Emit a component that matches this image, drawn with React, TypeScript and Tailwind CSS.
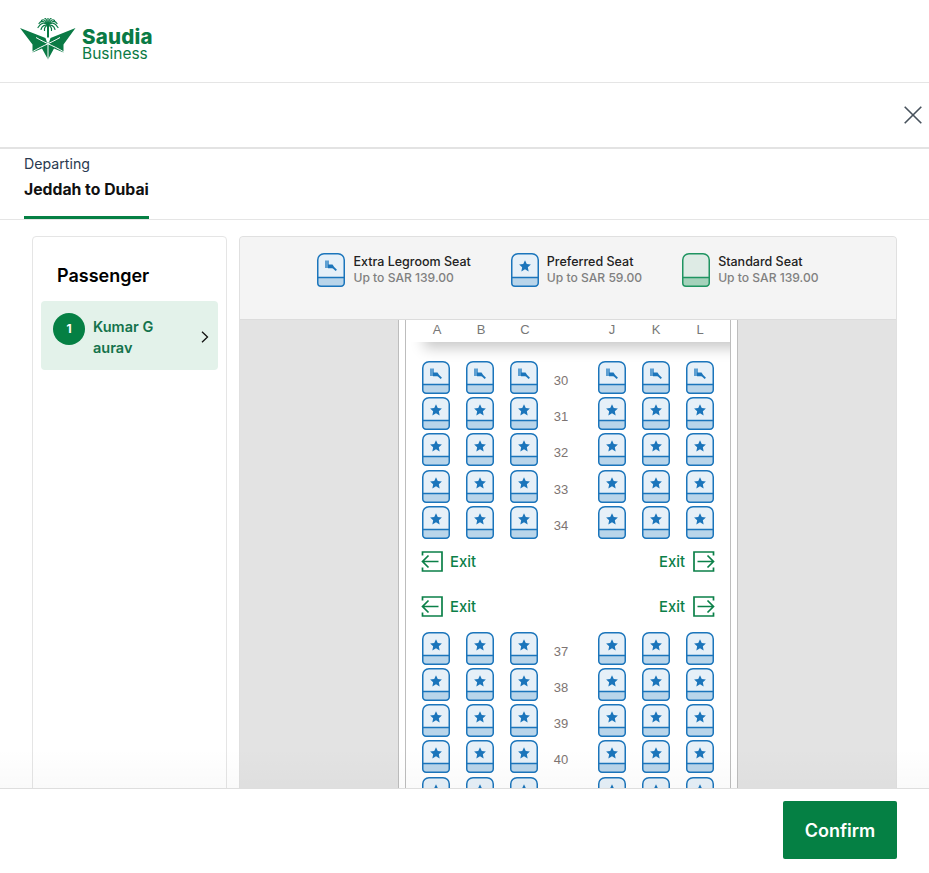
import React from "react";

const BLUE = "#1b75bb";

function Seat({ kind = "star", h = 33 }: { kind?: "star" | "leg" | "std"; h?: number }) {
  const std = kind === "std";
  const stroke = std ? "#1f9461" : BLUE;
  const top = std ? "#deebe5" : "#e6f0f8";
  const bottom = std ? "#a5d2bb" : "#b9d5ea";
  const split = h - 9.5;
  return (
    <svg width="28" height={h} viewBox={`0 0 28 ${h}`} className="block shrink-0">
      <path
        d={`M0.75 ${split} V7 A6.25 6.25 0 0 1 7 0.75 H21 A6.25 6.25 0 0 1 27.25 7 V${split} Z`}
        fill={top}
      />
      <path
        d={`M0.75 ${split} H27.25 V${h - 4} A3.25 3.25 0 0 1 24 ${h - 0.75} H4 A3.25 3.25 0 0 1 0.75 ${h - 4} Z`}
        fill={bottom}
      />
      <path
        d={`M0.75 ${h - 4} V7 A6.25 6.25 0 0 1 7 0.75 H21 A6.25 6.25 0 0 1 27.25 7 V${h - 4} A3.25 3.25 0 0 1 24 ${h - 0.75} H4 A3.25 3.25 0 0 1 0.75 ${h - 4} Z M0.75 ${split} H27.25`}
        fill="none"
        stroke={stroke}
        strokeWidth="1.5"
      />
      {kind === "star" && (
        <path
          d="M14 7.2 L15.75 11 L19.9 11.5 L16.85 14.3 L17.65 18.4 L14 16.35 L10.35 18.4 L11.15 14.3 L8.1 11.5 L12.25 11 Z"
          fill={BLUE}
        />
      )}
      {kind === "leg" && (
        <g>
          <path d="M8 7.5 H12 V15 H8 Z" fill="#5d9fd2" />
          <path d="M11 11.5 H15.5 L16.5 13 V15.2 H11 Z" fill={BLUE} />
          <path d="M15.5 13.8 L19.3 17.4" stroke={BLUE} strokeWidth="1.9" fill="none" />
        </g>
      )}
    </svg>
  );
}

function ExitIcon({ right = false }: { right?: boolean }) {
  return (
    <svg width="22" height="21" viewBox="0 0 22 21" fill="none" className={right ? "block -scale-x-100" : "block"}>
      <path
        d="M1.5 4.5 V1 H21 V20 H1.5 V16.5 M17.5 10.5 H1.5 M7.5 4.5 L1.5 10.5 L7.5 16.5"
        stroke="#0b8048"
        strokeWidth="1.7"
      />
    </svg>
  );
}

function Legend({ kind, title, price }: { kind: "star" | "leg" | "std"; title: string; price: string }) {
  return (
    <div className="flex items-start gap-2">
      <Seat kind={kind} h={34} />
      <div className="mt-[1px]">
        <div className="text-[12.5px] leading-[16px] font-medium text-[#222]">{title}</div>
        <div className="text-[12.1px] leading-[15px] font-medium text-[#808080]">{price}</div>
      </div>
    </div>
  );
}

const left = ["A", "B", "C"];
const right = ["J", "K", "L"];

function Row({ n, kind = "star" }: { n?: number; kind?: "star" | "leg" }) {
  return (
    <div className="flex h-[33px] pl-[16px]">
      <div className="flex gap-4">
        {left.map((c) => (
          <Seat key={c} kind={kind} />
        ))}
      </div>
      <div
        className="w-[60px] pr-[14px] pt-[12px] text-center text-[13px] leading-[15px] text-[#7d7472]"
        style={{ fontFamily: '"Liberation Sans", sans-serif' }}
      >
        {n}
      </div>
      <div className="flex gap-4">
        {right.map((c) => (
          <Seat key={c} kind={kind} />
        ))}
      </div>
    </div>
  );
}

function ExitRow({ className }: { className: string }) {
  return (
    <div className={`flex h-[21px] items-center justify-between pl-[15px] pr-[15px] ${className}`}>
      <div className="flex items-center gap-[7px]">
        <ExitIcon />
        <span className="pt-[2px] text-[14.8px] leading-[18px] font-medium text-[#0b8048]">Exit</span>
      </div>
      <div className="flex items-center gap-[8px]">
        <span className="pt-[2px] text-[14.8px] leading-[18px] font-medium text-[#0b8048]">Exit</span>
        <ExitIcon right />
      </div>
    </div>
  );
}

function Logo() {
  return (
    <div className="flex h-[82px] items-start pl-[20px]">
      <svg width="57" height="42" viewBox="20 17.5 57 42" className="mt-[17.5px] block shrink-0">
        <g stroke="#0a7a45" strokeWidth="1.2" fill="none" strokeLinecap="round">
          <path d="M48 25 C45 21 41 22 38 27" />
          <path d="M48 25 C45 20 41 20 39 23" />
          <path d="M48 25 C46 19 43 18.5 41.5 20" />
          <path d="M48 25 C47 19 46 18 45 18" />
          <path d="M48 25 V18" />
          <path d="M48 25 C49 19 50 18 51 18" />
          <path d="M48 25 C50 19 53 18.5 54.5 20" />
          <path d="M48 25 C51 20 55 20 57 23" />
          <path d="M48 25 C51 21 55 22 58 27" />
          <path d="M48 25 C45 24 42 25 41 29" />
          <path d="M48 25 C51 24 54 25 55 29" />
          <path d="M48 25 C46 25 44 27 44.5 30" />
          <path d="M48 25 C50 25 52 27 51.5 30" />
        </g>
        <path d="M47 25 H49 V37 H47 Z" fill="#0a7a45" />
        <path
          d="M20 27.5 L45.5 37.5 L47 42 H49 L50.5 37.5 L75.5 27.5 L63.5 44 L63.5 52 L54 48 L48 59 L42 48 L32.5 52 L32.5 44 Z"
          fill="#0a7a45"
        />
        <path d="M30 53 C38 47 50 43 60 37" stroke="#fff" strokeWidth="1" fill="none" />
        <path d="M66 53 C58 47 46 43 36 37" stroke="#fff" strokeWidth="1" fill="none" />
        <path d="M48 42 V59" stroke="#fff" strokeWidth="1" />
      </svg>
      <div className="ml-[5px] mt-[29px] text-[#0a7a45]">
        <div className="text-[20.5px] font-extrabold leading-[16px] tracking-[0.2px]">Saudia</div>
        <div className="text-[15.5px] leading-[17px]">Business</div>
      </div>
    </div>
  );
}

export default function App() {
  return (
    <div
      className="flex h-[873px] flex-col overflow-hidden bg-white text-black"
      style={{ fontFamily: 'Inter, "Liberation Sans", sans-serif' }}
    >
      <header className="h-[83px] shrink-0 border-b border-[#e5e5e5]">
        <Logo />
      </header>

      <div className="flex h-[66px] shrink-0 items-center justify-end border-b-2 border-[#e3e3e3] pr-[7px]">
        <svg width="18" height="18" viewBox="0 0 18 18" className="block" stroke="#47525c" strokeWidth="1.6">
          <path d="M0.7 0.7 L17.3 17.3 M17.3 0.7 L0.7 17.3" />
        </svg>
      </div>

      <div className="h-[71px] shrink-0 border-b border-[#e5e5e5] px-[24px]">
        <div className="inline-block h-[70px] border-b-[3px] border-[#058044] pt-[5px]">
          <div className="text-[14.2px] leading-[19px] text-[#2a3a50]">Departing</div>
          <div className="mt-[7px] text-[15.75px] font-bold leading-[20px] text-[#111]">Jeddah to Dubai</div>
        </div>
      </div>

      <main className="relative flex min-h-0 flex-1 gap-[12px] overflow-hidden pl-[32px] pt-[16px]">
        <aside className="h-[640px] w-[195px] shrink-0 rounded-t border border-[#e5e5e5] px-[8px]">
          <h2 className="pl-[16px] pt-[26px] text-[18px] font-semibold leading-[26px] text-black">Passenger</h2>
          <div className="mt-[12px] flex h-[69px] items-start rounded bg-[#e3f2ea] pl-[12px] pr-[8px] pt-[12px]">
            <div className="flex h-[32px] w-[32px] shrink-0 items-center justify-center rounded-full bg-[#058044] text-[12px] font-bold text-white">
              1
            </div>
            <div className="ml-[8px] mt-[3px] w-[66px] break-all text-[14.5px] font-semibold leading-[21px] text-[#14734c]">
              Kumar Gaurav
            </div>
            <svg width="8" height="12" viewBox="0 0 8 12" fill="none" className="ml-auto mr-[1px] mt-[18px]" stroke="#111" strokeWidth="1.3">
              <path d="M1 0.8 L6.5 6 L1 11.2" />
            </svg>
          </div>
        </aside>

        <section className="flex h-[640px] w-[658px] shrink-0 flex-col overflow-hidden rounded-t border border-[#e0e0e0] bg-[#e3e3e3]">
          <div className="flex h-[83px] shrink-0 justify-center gap-10 border-b border-[#dcdcdc] bg-[#f4f4f4] pt-[16px]">
            <Legend kind="leg" title="Extra Legroom Seat" price="Up to SAR 139.00" />
            <Legend kind="star" title="Preferred Seat" price="Up to SAR 59.00" />
            <Legend kind="std" title="Standard Seat" price="Up to SAR 139.00" />
          </div>

          <div className="ml-[158px] w-[340px] flex-1 border-x border-[#bdbdbd] bg-white px-[6px]">
            <div className="h-full overflow-hidden border-x border-[#bdbdbd]">
              <div
                className="flex h-[22px] pl-[16px] text-[13px] leading-[20px] text-[#777] shadow-[18px_6px_14px_rgba(0,0,0,0.22)]"
                style={{ fontFamily: '"Liberation Sans", sans-serif' }}
              >
                <div className="flex gap-4">
                  {left.map((c) => (
                    <div key={c} className="w-[28px] pl-[2px] text-center">{c}</div>
                  ))}
                </div>
                <div className="w-[60px]" />
                <div className="flex gap-4">
                  {right.map((c) => (
                    <div key={c} className="w-[28px] text-center">{c}</div>
                  ))}
                </div>
              </div>
              <div className="mt-[19px] flex flex-col gap-[3.2px]">
                <Row n={30} kind="leg" />
                <Row n={31} />
                <Row n={32} />
                <Row n={33} />
                <Row n={34} />
              </div>
              <ExitRow className="mt-[12px]" />
              <ExitRow className="mt-[24px]" />
              <div className="mt-[15px] flex flex-col gap-[3.2px]">
                <Row n={37} />
                <Row n={38} />
                <Row n={39} />
                <Row n={40} />
                <Row />
              </div>
            </div>
          </div>
        </section>

        <div className="pointer-events-none absolute inset-x-0 bottom-0 h-[40px] bg-[linear-gradient(to_top,rgba(0,0,0,0.018),rgba(0,0,0,0))]" />
      </main>

      <footer className="flex h-[85px] shrink-0 items-start justify-end border-t border-[#dedede] bg-white pr-[32px] pt-[12px]">
        <button className="flex h-[58px] w-[114px] items-center justify-center rounded-[2px] bg-[#058044] text-[18px] font-semibold text-white">
          Confirm
        </button>
      </footer>
    </div>
  );
}
